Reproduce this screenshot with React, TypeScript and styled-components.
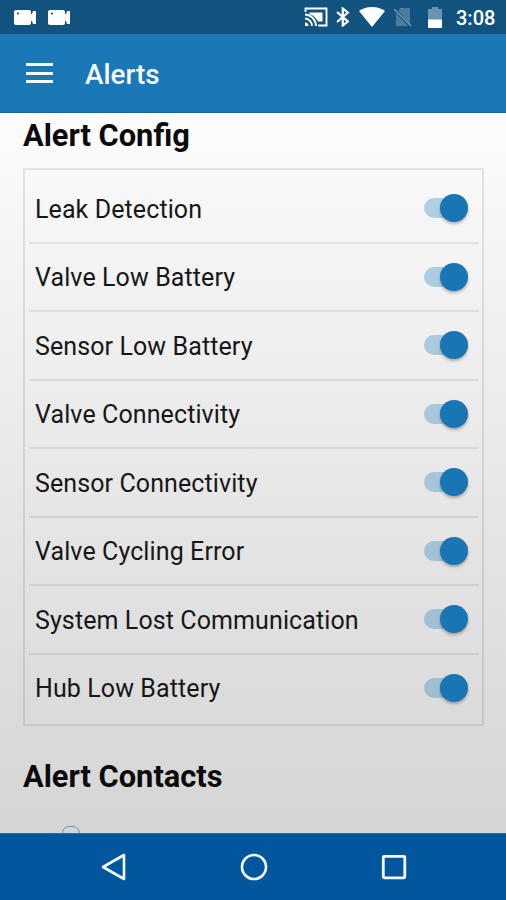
import React from "react";
import styled, { createGlobalStyle } from "styled-components";

const GlobalStyle = createGlobalStyle`
  * { box-sizing: border-box; }
  body { margin: 0; font-family: Roboto, "Liberation Sans", sans-serif; overflow: hidden; }
`;

const Screen = styled.div`
  width: 506px;
  height: 900px;
  display: flex;
  flex-direction: column;
  overflow: hidden;
`;

const StatusBar = styled.header`
  flex: 0 0 34px;
  display: flex;
  justify-content: space-between;
  align-items: center;
  padding: 0 10px 0 14px;
  background: #12527f;
  color: #fff;
`;

const StatusGroup = styled.div`
  display: flex;
  align-items: center;
  svg { display: block; }
`;

const Cameras = styled(StatusGroup)`
  gap: 11px;
`;

const Clock = styled.span`
  width: 40px;
  margin-left: 14px;
  font-size: 20px;
  line-height: 30px;
  font-weight: 500;
  white-space: nowrap;
  padding-top: 2px;
`;

const StatusIcon = styled.span<{ $gap: number }>`
  margin-left: ${(p) => p.$gap}px;
`;

const AppBar = styled.div`
  flex: 0 0 79px;
  display: flex;
  align-items: center;
  padding: 3px 0 0 26px;
  background: #1b78b6;
  border-bottom: 1px solid #17689e;
`;

const MenuButton = styled.button`
  width: 27px;
  height: 20px;
  padding: 0;
  border: 0;
  background: none;
  display: flex;
  flex-direction: column;
  justify-content: space-between;
  margin-top: -3px;
`;

const MenuLine = styled.span`
  width: 27px;
  height: 3px;
  background: #f4fbff;
`;

const Title = styled.h1`
  margin: 0 0 0 32px;
  color: #f5fbff;
  font-size: 27.8px;
  font-weight: 500;
  line-height: 36px;
`;

const Content = styled.main`
  flex: 1;
  min-height: 0;
  overflow: hidden;
  padding: 3px 22px 0 23px;
  background: linear-gradient(#fdfdfd 0%, #f6f6f6 14%, #e4e4e4 60%, #d5d5d5 100%);
`;

const Heading = styled.h2`
  margin: 0;
  height: 40px;
  line-height: 40px;
  font-size: 30.8px;
  font-weight: 700;
  color: #0b0b0b;
  white-space: nowrap;
`;

const Panel = styled.section`
  height: 558px;
  margin: 12px 0 31px;
  padding: 5px 3px 0 4px;
  border: 2px solid rgba(0, 0, 0, 0.09);
`;

const Row = styled.label`
  display: flex;
  justify-content: space-between;
  align-items: center;
  height: 68.5px;
  padding: 0 11px 0 6px;
  border-bottom: 2px solid rgba(0, 0, 0, 0.08);
  &:last-child { border-bottom-color: transparent; }
`;

const RowLabel = styled.span`
  font-size: 25px;
  line-height: 36px;
  letter-spacing: 0.1px;
  color: #171717;
  white-space: nowrap;
  padding-top: 3px;
`;

const Track = styled.span`
  width: 44px;
  height: 20px;
  border-radius: 10px;
  background: rgba(27, 125, 187, 0.32);
  display: flex;
  align-items: center;
  justify-content: flex-end;
`;

const Thumb = styled.span`
  width: 28px;
  height: 28px;
  border-radius: 50%;
  background: #1976b3;
  box-shadow: 0 2px 3px rgba(0, 0, 0, 0.28);
`;

const ContactPreview = styled.div`
  width: 18px;
  height: 18px;
  margin: 29px 0 0 39px;
  border: 1px solid #6994b8;
  border-radius: 7px;
`;

const NavBar = styled.nav`
  flex: 0 0 67px;
  display: flex;
  justify-content: center;
  gap: 112px;
  align-items: center;
  padding-left: 1px;
  background: #02569e;
  border-top: 1px solid #286b9e;
  svg { display: block; }
`;

const Camera = () => (
  <svg width="23" height="17" viewBox="0 0 23 17">
    <path d="M2 1h13q2 0 2 2v2h1l1-3h3v13h-3l-1-3h-1v2q0 2-2 2H2q-2 0-2-2V3q0-2 2-2z" fill="#fff" />
    <circle cx="4" cy="4.5" r="1.1" fill="#12527f" />
  </svg>
);

const alerts = [
  "Leak Detection",
  "Valve Low Battery",
  "Sensor Low Battery",
  "Valve Connectivity",
  "Sensor Connectivity",
  "Valve Cycling Error",
  "System Lost Communication",
  "Hub Low Battery",
];

export default function App() {
  return (
    <Screen>
      <GlobalStyle />
      <StatusBar>
        <Cameras>
          <Camera />
          <Camera />
        </Cameras>
        <StatusGroup>
          <svg width="24" height="20" viewBox="0 0 24 20" fill="none" stroke="#fff" strokeWidth="1.9">
            <path d="M1.5 5V1.5h21v17H14" />
            <path d="M5.5 5.5h13v9h-4.5C12 11 9.5 8 5.5 7.5z" fill="#fff" stroke="none" />
            <path d="M1 7.5a11.5 11.5 0 0 1 11 11.5M1 11.5a7.5 7.5 0 0 1 7 7.5" />
            <path d="M1 15.5a3.5 3.5 0 0 1 3.5 3.5H1z" fill="#fff" stroke="none" />
          </svg>
          <StatusIcon $gap={8}>
            <svg width="14" height="20" viewBox="0 0 13 20" preserveAspectRatio="none" fill="none" stroke="#fff" strokeWidth="2.1">
              <path d="M1 5l10 9.5-4.7 4V1.5l4.7 4L1 15" />
            </svg>
          </StatusIcon>
          <StatusIcon $gap={9}>
            <svg width="26" height="20" viewBox="0 0 26 20">
              <path d="M13 20L0 4C7-1.3 19-1.3 26 4z" fill="#fff" />
            </svg>
          </StatusIcon>
          <StatusIcon $gap={8}>
            <svg width="19" height="20" viewBox="0 0 19 20">
              <path d="M7 1h10v16.5L5.5 4zM3 6l12 13H3z" fill="#4b7c9f" />
              <path d="M1 2l17 17" stroke="#6c96b3" strokeWidth="1.6" />
            </svg>
          </StatusIcon>
          <StatusIcon $gap={16}>
            <svg width="14" height="21" viewBox="0 0 14 21">
              <path d="M4 0h6v2h4v11H0V2h4z" fill="#6994b3" />
              <path d="M0 12.5h14V20q0 1-1 1H1q-1 0-1-1z" fill="#fff" />
            </svg>
          </StatusIcon>
          <Clock>3:08</Clock>
        </StatusGroup>
      </StatusBar>
      <AppBar>
        <MenuButton aria-label="Menu">
          <MenuLine />
          <MenuLine />
          <MenuLine />
        </MenuButton>
        <Title>Alerts</Title>
      </AppBar>
      <Content>
        <Heading>Alert Config</Heading>
        <Panel>
          {alerts.map((name) => (
            <Row key={name}>
              <RowLabel>{name}</RowLabel>
              <Track>
                <Thumb />
              </Track>
            </Row>
          ))}
        </Panel>
        <Heading>Alert Contacts</Heading>
        <ContactPreview />
      </Content>
      <NavBar>
        <svg width="28" height="28" viewBox="0 0 28 28">
          <path d="M24 2v24L3 14z" fill="none" stroke="#f4fbff" strokeWidth="2.6" strokeLinejoin="round" />
        </svg>
        <svg width="28" height="28" viewBox="0 0 28 28">
          <circle cx="14" cy="14" r="12" fill="none" stroke="#f4fbff" strokeWidth="2.6" />
        </svg>
        <svg width="28" height="28" viewBox="0 0 28 28">
          <rect x="3.3" y="3.3" width="21.5" height="21.5" rx="1" fill="none" stroke="#f4fbff" strokeWidth="2.8" />
        </svg>
      </NavBar>
    </Screen>
  );
}
